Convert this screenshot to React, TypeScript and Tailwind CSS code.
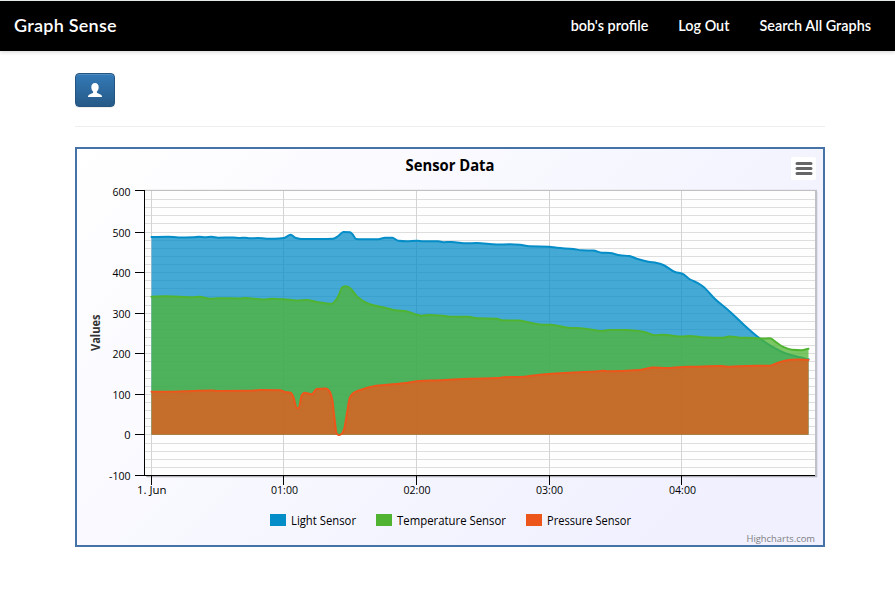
import React from 'react';

type Point = [number, number];

const light: Point[] = [
  [151.5, 237], [168, 236.7], [178.5, 237.5], [193, 237.3], [199, 236.7], [205, 237.2], [211.5, 236.8], [218, 237.7],
  [233, 237.5], [240, 238], [245, 237.7], [250, 238.3], [258, 238], [266.5, 238.7], [275, 238.7], [284, 238],
  [290.7, 234.7], [296, 238], [301.7, 239], [320, 239], [333, 238.8], [338.3, 236], [343.3, 231.9], [350, 232.3],
  [352.3, 234], [356, 239], [361.7, 239.3], [378.3, 239.3], [385, 237.8], [392.3, 237.8], [398.3, 240.8],
  [406.7, 241.3], [416.7, 240.7], [423.3, 241.3], [438.3, 241.3], [443.3, 242.2], [451.7, 242], [466.7, 243.3],
  [476.7, 243], [496.7, 244.5], [510, 244.3], [520, 244.8], [529.3, 246.3], [549.3, 246.7], [556.7, 247.8],
  [573.3, 249], [581.7, 250.3], [593.3, 250.5], [601.7, 252.7], [610, 253], [620, 255.3], [629.3, 256],
  [636.7, 258.7], [648.3, 261.7], [656.7, 263], [663.3, 265], [675, 272], [682.3, 273.7], [689.3, 279],
  [698.3, 283.3], [703.3, 286.7], [715, 299], [730, 311.7], [743.3, 324.3], [756.7, 336], [770, 345.3],
  [786.7, 353.7], [800, 357.3], [808.5, 359.3],
];

const temperature: Point[] = [
  [151.5, 296.7], [166.7, 296.3], [191.7, 297.3], [199.3, 296.8], [210, 298.7], [218.3, 298.2], [240, 298.4],
  [245, 298.1], [263.3, 299.5], [271.7, 298.8], [283.3, 299.3], [296.7, 300.4], [306.7, 299.9], [316.7, 302],
  [331.7, 303.8], [335, 301.3], [338.3, 296.3], [342.3, 287.3], [346, 286.2], [350, 288], [357.3, 296.7],
  [366.7, 303], [373.3, 305.3], [385, 307.7], [395, 310.3], [406, 311.2], [416.7, 314.7], [421.7, 315.8],
  [429.3, 314.9], [443.3, 315.7], [450, 316.7], [468.3, 316.8], [476.7, 318.3], [496.7, 318.7], [501.7, 320.3],
  [518.3, 320.6], [530, 322.7], [543.3, 324.7], [550.7, 324.8], [568.3, 327.7], [583.3, 328.4], [602.7, 331],
  [608.3, 330], [626.7, 330], [643.3, 331.7], [655, 335.3], [662.7, 334.7], [682.3, 336.6], [690, 335.9],
  [701.7, 337.2], [723.3, 337.7], [729.3, 336.4], [740, 337.7], [753.3, 338], [761.7, 338.6], [770, 338.3],
  [776.7, 342.7], [783.3, 347], [791.7, 349.7], [801.7, 350.2], [808.5, 348.7],
];

const pressure: Point[] = [
  [151.5, 391.7], [170, 391.8], [191.7, 391], [211.7, 390.4], [218, 390.9], [250, 390.7], [260, 390.1], [280, 390.3],
  [285, 392], [290.7, 392.8], [293.3, 396.7], [296.7, 408], [298.7, 408.2], [301.7, 395.3], [304.3, 392.7],
  [311.7, 394.3], [316.7, 389], [326, 388.4], [329.3, 391], [332.3, 400], [334.3, 416.7], [336.7, 433.5],
  [338.7, 435.1], [341.7, 433.7], [344.2, 428.7], [346.7, 415], [350, 397.3], [354, 392.7], [363.3, 389],
  [375, 386], [406.7, 383], [420, 381], [440, 380.3], [470, 378.7], [498.3, 378], [503.3, 377.2], [520, 377],
  [540, 374.7], [570, 372.8], [595, 371.6], [602.7, 370.7], [608.3, 371.2], [640, 370], [653.3, 367.6],
  [666.7, 368], [682.3, 366.9], [693, 366.7], [721.7, 366.1], [730, 366.7], [746.7, 365.9], [770, 365.7],
  [775, 364], [785, 360.7], [798.3, 359.6], [808.5, 360],
];

/** Smooth curve with horizontal tangents at local extremes, so it never overshoots. */
function spline(points: Point[]): string {
  const slopes = points.slice(1).map((p, i) => (p[1] - points[i][1]) / (p[0] - points[i][0]));
  const tangents = points.map((_, i) => {
    const a = slopes[i - 1] ?? slopes[i];
    const b = slopes[i] ?? slopes[i - 1];
    return a * b <= 0 ? 0 : (2 * a * b) / (a + b);
  });
  let d = `M${points[0][0]} ${points[0][1]}`;
  for (let i = 1; i < points.length; i++) {
    const [x0, y0] = points[i - 1];
    const [x1, y1] = points[i];
    const h = (x1 - x0) / 3;
    d += `C${x0 + h} ${y0 + tangents[i - 1] * h} ${x1 - h} ${y1 - tangents[i] * h} ${x1} ${y1}`;
  }
  return d;
}

const series = [
  { name: 'Light Sensor', color: '#058DC7', points: light, x: 270, width: 65 },
  { name: 'Temperature Sensor', color: '#50B432', points: temperature, x: 376, width: 109 },
  { name: 'Pressure Sensor', color: '#ED561B', points: pressure, x: 526, width: 84 },
];

const hours = [
  { x: 151.5, label: '1. Jun', left: 137, width: 29.5 },
  { x: 283.5, label: '01:00', left: 271, width: 27 },
  { x: 416.5, label: '02:00', left: 403.5, width: 27 },
  { x: 549.5, label: '03:00', left: 536, width: 27 },
  { x: 681.5, label: '04:00', left: 669, width: 27 },
];

const gridY = (k: number) => Math.round(191 + (k * 284) / 35) + 0.5;
const values = [600, 500, 400, 300, 200, 100, 0, -100];

function SensorChart() {
  return (
    <svg
      className="block h-[400px] w-[750px] font-['Open_Sans','Noto_Sans',sans-serif]"
      viewBox="75 147 750 400"
      role="img"
      aria-label="Sensor Data"
    >
      <defs>
        <linearGradient id="chart-bg" gradientUnits="userSpaceOnUse" x1="75" y1="147" x2="575" y2="647">
          <stop offset="0" stopColor="#fff" />
          <stop offset="1" stopColor="#f0f0ff" />
        </linearGradient>
      </defs>
      <rect x="76" y="148" width="748" height="398" fill="url(#chart-bg)" stroke="#4572A7" strokeWidth="2" />

      <g fill="none" stroke="#000">
        <path d="M146 476.5H817" strokeOpacity="0.28" />
        <path d="M147 477.5H817" strokeOpacity="0.08" />
        <path d="M817.5 192V477" strokeOpacity="0.06" />
        <path d="M144 189.5H817" strokeOpacity="0.04" />
      </g>
      <rect x="144.5" y="190.5" width="671" height="285" fill="#fefeff" />

      <g stroke="#dedede">
        {Array.from({ length: 34 }, (_, i) => (
          <path key={i} d={`M145 ${gridY(i + 1)}H815`} />
        ))}
      </g>
      <g stroke="#d4d4d4">
        {hours.map((h) => (
          <path key={h.x} d={`M${h.x} 191V475`} />
        ))}
      </g>
      <path d="M144 190.5H816" stroke="#c0c0c0" />
      <path d="M816 190V476.5" stroke="#c0c0c8" strokeWidth="2" />

      {series.map((s) => (
        <g key={s.name}>
          <path d={`${spline(s.points)}V434.8H151.5Z`} fill={s.color} fillOpacity="0.75" />
          <path d={spline(s.points)} fill="none" stroke={s.color} strokeWidth="2" strokeLinejoin="round" strokeLinecap="round" />
        </g>
      ))}

      <path d="M144.5 190V476M144 475.5H815" stroke="#000" fill="none" />
      {values.map((v, i) => (
        <g key={v}>
          <path d={`M135 ${i === 0 ? 190.5 : gridY(i * 5)}H144`} stroke="#000" />
          <text
            x="130.5"
            y={gridY(i * 5) + 4.5}
            textAnchor="end"
            fontSize="11"
            textLength={v === 0 ? 6.3 : v < 0 ? 21.5 : 18}
            lengthAdjust="spacingAndGlyphs"
          >
            {v}
          </text>
        </g>
      ))}
      {hours.map((h) => (
        <g key={h.label}>
          <path d={`M${h.x} 476V485`} stroke="#000" />
          <text x={h.left} y="494" fontSize="11" textLength={h.width} lengthAdjust="spacingAndGlyphs">
            {h.label}
          </text>
        </g>
      ))}

      <text x="405.5" y="171" fontSize="16" fontWeight="700" textLength="89" lengthAdjust="spacingAndGlyphs">
        Sensor Data
      </text>
      <text
        transform="translate(99.5 351) rotate(-90)"
        fontSize="12"
        fontWeight="700"
        fill="#333"
        textLength="36.5"
        lengthAdjust="spacingAndGlyphs"
      >
        Values
      </text>

      {series.map((s) => (
        <g key={s.name}>
          <rect x={s.x} y="514" width="16" height="12" fill={s.color} />
          <text x={s.x + 21} y="525" fontSize="12" textLength={s.width} lengthAdjust="spacingAndGlyphs">
            {s.name}
          </text>
        </g>
      ))}
      <text x="746.5" y="542" fontSize="9.5" fill="#808080" textLength="68.5" lengthAdjust="spacingAndGlyphs">
        Highcharts.com
      </text>

      <rect x="791" y="157" width="25" height="23" rx="2" fill="#fff" />
      <path d="M797 163.5H811M797 168.5H811M797 173.5H811" stroke="#666" strokeWidth="3" strokeLinecap="round" />
    </svg>
  );
}

export default function App() {
  return (
    <div className="min-h-[609px] w-[895px] bg-white">
      <nav className="flex h-[51px] items-center justify-between border-t border-[#e4e9e6] bg-black pr-6 pb-0.5 pl-3.5 font-['Lato',sans-serif] text-white shadow-[0_1px_4px_rgba(0,0,0,0.18)]">
        <a className="text-[18px] leading-5 font-semibold tracking-[0.25px]">Graph Sense</a>
        <div className="flex gap-[30px] pt-px text-[14.4px] leading-5 font-semibold">
          <a>bob's profile</a>
          <a>Log Out</a>
          <a>Search All Graphs</a>
        </div>
      </nav>
      <main className="ml-[75px] w-[750px] pt-[22px]">
        <button
          aria-label="Profile"
          className="flex h-[34px] w-10 items-center justify-center rounded border border-[#245580] bg-linear-to-b from-[#337ab7] to-[#265a88] shadow-[inset_0_1px_0_rgba(255,255,255,0.15),0_1px_1px_rgba(0,0,0,0.075)]"
        >
          <svg className="h-3.5 w-3.5" viewBox="0 0 14 14" fill="#fff">
            <path d="M7 0C9.3 0 10.7 1.7 10.7 4.1C10.7 6.1 10 7.6 8.9 8.6V9.7C9.3 10.3 13.2 11.4 13.7 12.5C14 13 14 13.5 14 14H0C0 13.5 0 13 .3 12.5C.8 11.4 4.7 10.3 5.1 9.7V8.6C4 7.6 3.3 6.1 3.3 4.1C3.3 1.7 4.7 0 7 0Z" />
          </svg>
        </button>
        <hr className="mt-[19px] mb-5 border-t border-[#eeeeee]" />
        <SensorChart />
      </main>
    </div>
  );
}
